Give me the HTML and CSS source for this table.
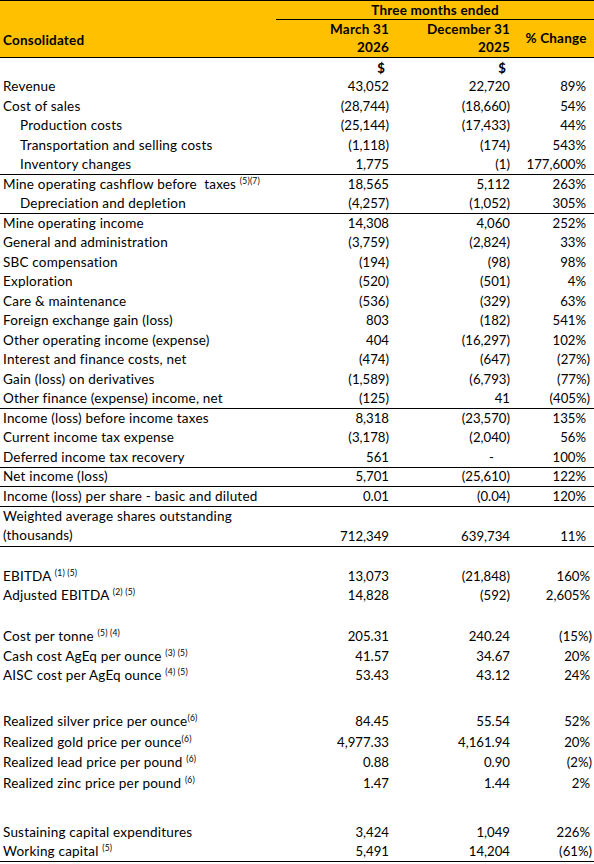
FILE: index.html
```html
<!DOCTYPE html>
<html lang="en">
<head>
    <meta charset="UTF-8">
    <meta name="viewport" content="width=device-width, initial-scale=1.0">
    <title>Consolidated</title>
    <link rel="stylesheet" href="styles.css">
</head>
<body>
    <table class="fin">
        <colgroup>
            <col class="c-label">
            <col class="c-mar">
            <col class="c-dec">
            <col class="c-pct">
        </colgroup>
        <thead>
            <tr class="h1">
                <th class="lbl" rowspan="3"><span class="cons">Consolidated</span></th>
                <th class="span" colspan="3">Three months ended</th>
            </tr>
            <tr class="h2">
                <th class="n">March 31</th>
                <th class="n">December 31</th>
                <th class="chg" rowspan="2">% Change</th>
            </tr>
            <tr class="h3">
                <th class="n">2026</th>
                <th class="n">2025</th>
            </tr>
        </thead>
        <tbody class="upper">
            <tr class="cur">
                <td></td>
                <td class="n dol">$</td>
                <td class="n dol">$</td>
                <td></td>
            </tr>
            <tr><td class="lbl">Revenue</td><td class="n">43,052</td><td class="n">22,720</td><td class="p">89%</td></tr>
            <tr><td class="lbl">Cost of sales</td><td class="n">(28,744)</td><td class="n">(18,660)</td><td class="p">54%</td></tr>
            <tr><td class="lbl sub">Production costs</td><td class="n">(25,144)</td><td class="n">(17,433)</td><td class="p">44%</td></tr>
            <tr><td class="lbl sub">Transportation and selling costs</td><td class="n">(1,118)</td><td class="n">(174)</td><td class="p">543%</td></tr>
            <tr class="rule"><td class="lbl sub">Inventory changes</td><td class="n">1,775</td><td class="n">(1)</td><td class="p">177,600%</td></tr>
            <tr><td class="lbl">Mine operating cashflow before&nbsp; taxes <sup>(5)(7)</sup></td><td class="n">18,565</td><td class="n">5,112</td><td class="p">263%</td></tr>
            <tr class="rule"><td class="lbl sub">Depreciation and depletion</td><td class="n">(4,257)</td><td class="n">(1,052)</td><td class="p">305%</td></tr>
            <tr><td class="lbl">Mine operating income</td><td class="n">14,308</td><td class="n">4,060</td><td class="p">252%</td></tr>
            <tr><td class="lbl">General and administration</td><td class="n">(3,759)</td><td class="n">(2,824)</td><td class="p">33%</td></tr>
            <tr><td class="lbl">SBC compensation</td><td class="n">(194)</td><td class="n">(98)</td><td class="p">98%</td></tr>
            <tr><td class="lbl">Exploration</td><td class="n">(520)</td><td class="n">(501)</td><td class="p">4%</td></tr>
            <tr><td class="lbl">Care &amp; maintenance</td><td class="n">(536)</td><td class="n">(329)</td><td class="p">63%</td></tr>
            <tr><td class="lbl">Foreign exchange gain (loss)</td><td class="n">803</td><td class="n">(182)</td><td class="p">541%</td></tr>
            <tr><td class="lbl">Other operating income (expense)</td><td class="n">404</td><td class="n">(16,297)</td><td class="p">102%</td></tr>
            <tr><td class="lbl">Interest and finance costs, net</td><td class="n">(474)</td><td class="n">(647)</td><td class="p neg">(27%)</td></tr>
            <tr><td class="lbl">Gain (loss) on derivatives</td><td class="n">(1,589)</td><td class="n">(6,793)</td><td class="p neg">(77%)</td></tr>
            <tr class="rule"><td class="lbl">Other finance (expense) income, net</td><td class="n">(125)</td><td class="n">41</td><td class="p neg">(405%)</td></tr>
            <tr><td class="lbl">Income (loss) before income taxes</td><td class="n">8,318</td><td class="n">(23,570)</td><td class="p">135%</td></tr>
            <tr><td class="lbl">Current income tax expense</td><td class="n">(3,178)</td><td class="n">(2,040)</td><td class="p">56%</td></tr>
            <tr class="rule"><td class="lbl">Deferred income tax recovery</td><td class="n">561</td><td class="n dash">-</td><td class="p">100%</td></tr>
            <tr class="rule"><td class="lbl">Net income (loss)</td><td class="n">5,701</td><td class="n">(25,610)</td><td class="p">122%</td></tr>
            <tr class="rule"><td class="lbl">Income (loss) per share - basic and diluted</td><td class="n">0.01</td><td class="n">(0.04)</td><td class="p">120%</td></tr>
            <tr class="rule tall"><td class="lbl wrap">Weighted average shares outstanding (thousands)</td><td class="n">712,349</td><td class="n">639,734</td><td class="p">11%</td></tr>
        </tbody>
        <tbody class="lower">
            <tr class="gap g1"><td colspan="4"></td></tr>
            <tr><td class="lbl">EBITDA <sup>(1) (5)</sup></td><td class="n">13,073</td><td class="n">(21,848)</td><td class="p">160%</td></tr>
            <tr><td class="lbl">Adjusted EBITDA <sup>(2) (5)</sup></td><td class="n">14,828</td><td class="n">(592)</td><td class="p">2,605%</td></tr>
            <tr class="gap g2"><td colspan="4"></td></tr>
            <tr><td class="lbl">Cost per tonne <sup>(5) (4)</sup></td><td class="n">205.31</td><td class="n">240.24</td><td class="p neg">(15%)</td></tr>
            <tr><td class="lbl">Cash cost AgEq per ounce <sup>(3) (5)</sup></td><td class="n">41.57</td><td class="n">34.67</td><td class="p">20%</td></tr>
            <tr><td class="lbl">AISC cost per AgEq ounce <sup>(4) (5)</sup></td><td class="n">53.43</td><td class="n">43.12</td><td class="p">24%</td></tr>
            <tr class="gap g3"><td colspan="4"></td></tr>
            <tr class="price"><td class="lbl">Realized silver price per ounce<sup>(6)</sup></td><td class="n">84.45</td><td class="n">55.54</td><td class="p">52%</td></tr>
            <tr class="price"><td class="lbl">Realized gold price per ounce<sup>(6)</sup></td><td class="n">4,977.33</td><td class="n">4,161.94</td><td class="p">20%</td></tr>
            <tr class="price"><td class="lbl">Realized lead price per pound <sup>(6)</sup></td><td class="n">0.88</td><td class="n">0.90</td><td class="p neg">(2%)</td></tr>
            <tr class="price"><td class="lbl">Realized zinc price per pound <sup>(6)</sup></td><td class="n">1.47</td><td class="n">1.44</td><td class="p">2%</td></tr>
            <tr class="gap g4"><td colspan="4"></td></tr>
            <tr><td class="lbl">Sustaining capital expenditures</td><td class="n">3,424</td><td class="n">1,049</td><td class="p">226%</td></tr>
            <tr class="rule"><td class="lbl">Working capital <sup>(5)</sup></td><td class="n">5,491</td><td class="n">14,204</td><td class="p neg">(61%)</td></tr>
        </tbody>
    </table>
</body>
</html>
```

FILE: styles.css
```css
* {
    padding: 0;
    margin: 0;
}

body {
    font-family: Lato, "Liberation Sans", Arial, sans-serif;
    font-size: 13.5px;
    letter-spacing: 0.2px;
    color: #000;
    background-color: #fff;
}

.fin {
    width: 594px;
    border-collapse: collapse;
    table-layout: fixed;
}

.c-label {
    width: 276px;
}

.c-mar {
    width: 117px;
}

.c-dec {
    width: 121px;
}

.c-pct {
    width: 80px;
}

th, td {
    padding: 0;
    white-space: nowrap;
    vertical-align: middle;
    line-height: 15px;
}

/* header band */
thead {
    background-color: #ffc000;
    border-top: 1px solid #000;
    border-bottom: 1px solid #000;
}

thead th {
    font-weight: bold;
}

.h1, .h2, .h3 {
    height: 19px;
}

.h1 th.span {
    text-align: center;
    border-bottom: 1px solid #000;
}

thead th.lbl {
    text-align: left;
    padding-left: 3px;
    padding-top: 22px;
}

th.chg {
    text-align: center;
    padding-left: 4px;
}

/* body rows */
tbody tr {
    height: 19.5px;
}

.cur td {
    padding-top: 2px;
}

.lbl {
    text-align: left;
    padding-left: 3px;
}

.sub {
    padding-left: 20px;
}

.wrap {
    white-space: normal;
    line-height: 19.5px;
}

.tall td {
    vertical-align: bottom;
    padding-bottom: 2px;
}

.tall td.lbl {
    padding-bottom: 0;
}

tbody .n, tbody .p {
    letter-spacing: 0;
    font-size: 13.2px;
}

.n {
    text-align: right;
    padding-right: 4px;
}

.dol {
    font-weight: bold;
    padding-right: 8px;
}

.dash {
    padding-right: 20px;
}

.p {
    text-align: right;
    padding-right: 8px;
}

.p.neg {
    padding-right: 4px;
}

.lower .p {
    padding-right: 4px;
}

.lower .p.neg {
    padding-right: 2px;
}

.rule {
    border-bottom: 1px solid #000;
}

sup {
    font-size: 8.5px;
    line-height: 0;
    vertical-align: 5px;
}

.price {
    height: 20.5px;
}

.gap.g1 {
    height: 20.5px;
}

.gap.g2 {
    height: 21.5px;
}

.gap.g3 {
    height: 26px;
}

.gap.g4 {
    height: 29px;
}
```
